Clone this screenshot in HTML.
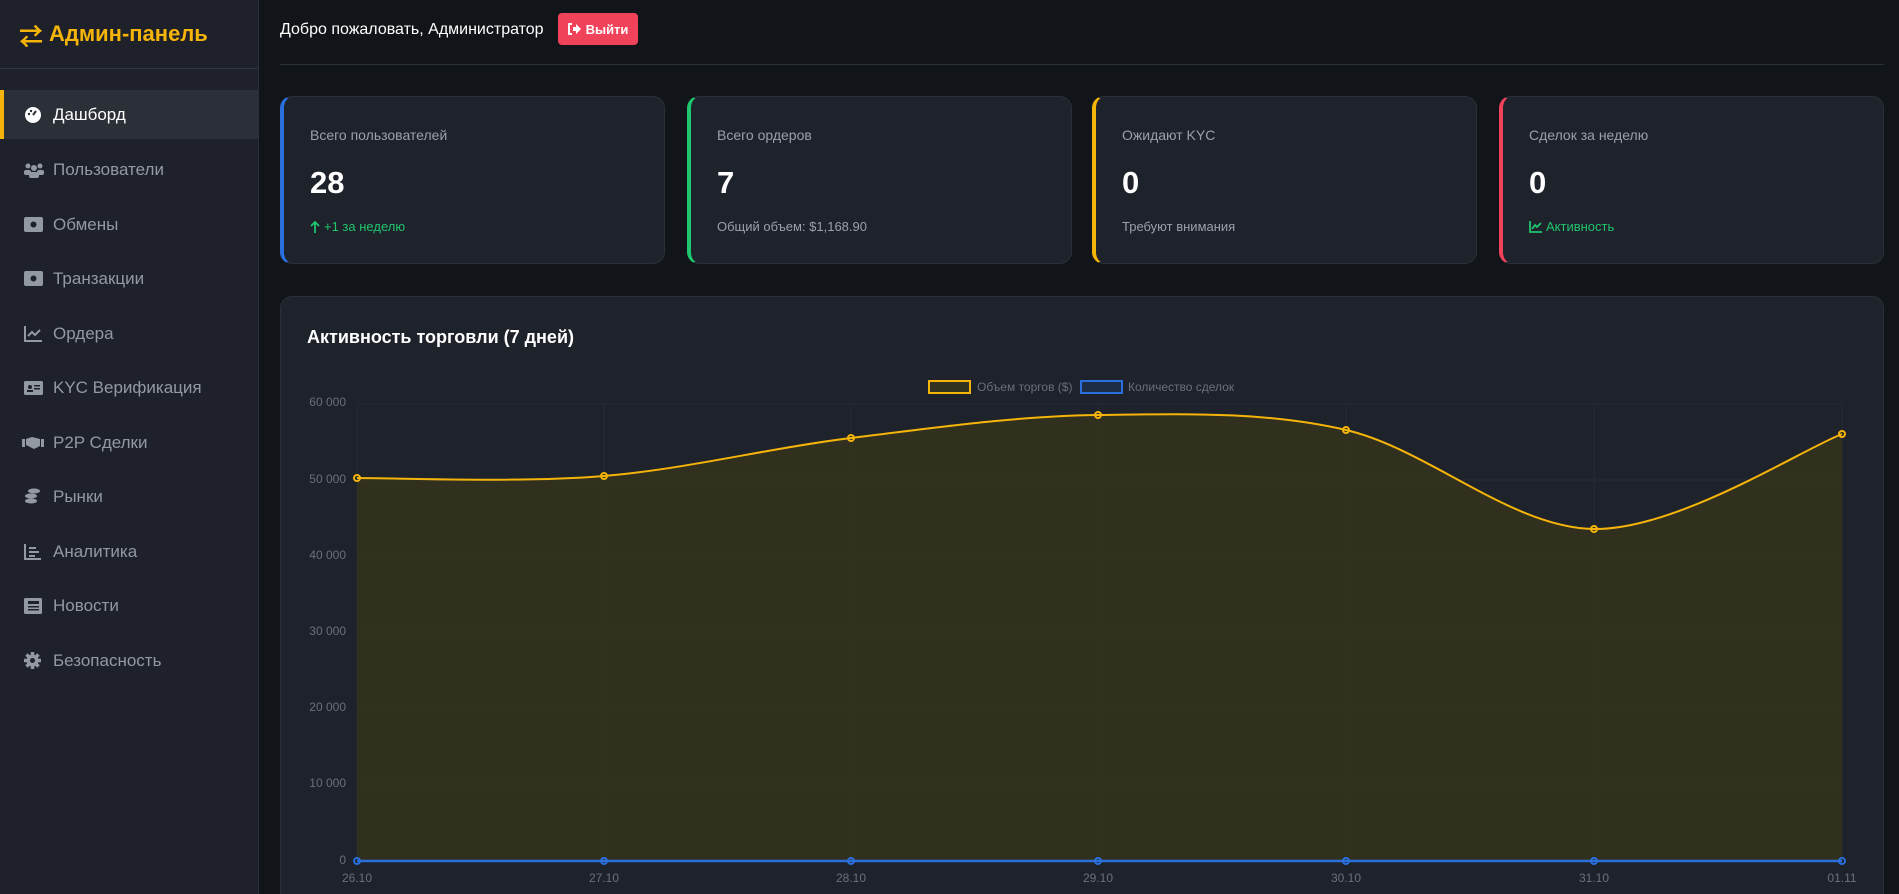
<!DOCTYPE html>
<html><head><meta charset="utf-8"><style>
*{box-sizing:border-box;margin:0;padding:0}
html{width:1899px;height:894px;overflow:hidden}
body{width:1899px;height:894px;overflow:hidden;background:#111418;font-family:"Liberation Sans","Noto Sans CJK SC",sans-serif;position:relative}
.sb{position:absolute;left:0;top:0;width:259px;height:894px;background:#1e2129;border-right:1px solid #2a2e37}
.logo{height:69px;border-bottom:1px solid #2f333c;display:flex;align-items:center;padding-left:19px;color:#f5b40a;font-weight:bold;font-size:22px}
.nav{position:absolute;left:0;width:259px;height:49px;display:flex;align-items:center;color:#9399a3;font-size:17px}
.nav svg{position:absolute;left:24px}
.nav span{position:absolute;left:53px}
.nav.act{background:#2b2f37;color:#fff;border-left:4px solid #f5b40a}
.hdr{position:absolute;left:280px;top:21px;color:#fff;font-size:16px}
.btn{position:absolute;left:558px;top:13px;width:80px;height:32px;background:#f0435a;border-radius:4px;color:#fff;font-size:13px;font-weight:bold;display:flex;align-items:center;justify-content:center;gap:5px}
.div{position:absolute;left:280px;right:15px;top:64px;border-top:1px solid #2b2f37}
.card{position:absolute;top:96px;width:385px;height:168px;background:#1e222a;border:1px solid #2b2f37;border-radius:12px;border-left-width:4px}
.card .l{position:absolute;left:26px;top:30px;color:#9aa0aa;font-size:14px}
.card .n{position:absolute;left:26px;top:68px;color:#fff;font-size:31px;font-weight:bold}
.card .s{position:absolute;left:26px;top:122px;font-size:13px;color:#9aa0aa;display:flex;align-items:center;gap:4px}
.g{color:#1fc56f!important}
.chart{position:absolute;left:280px;top:296px;width:1604px;height:598px;background:#1e222a;border:1px solid #2b2f37;border-bottom:none;border-radius:12px 12px 0 0}
</style></head><body>
<div class="sb">
<div class="logo"><span style="font-size:24px;margin-right:6px">⇄</span>Админ-панель</div>
<div class="nav act" style="top:90px"><svg style="left:20px" width="18" height="18" viewBox="0 0 18 18"><circle cx="9" cy="9" r="8" fill="#fff"/><path d="M9 9 L12 5" stroke="#2b2f37" stroke-width="2"/><circle cx="5" cy="8" r="1.2" fill="#2b2f37"/><circle cx="7" cy="5" r="1.2" fill="#2b2f37"/></svg><span style="left:49px">Дашборд</span></div>
<div class="nav" style="top:145px"><svg width="20" height="16" viewBox="0 0 20 16" fill="#9399a3"><circle cx="4" cy="4" r="2.5"/><circle cx="16" cy="4" r="2.5"/><circle cx="10" cy="6" r="3"/><rect x="0" y="8" width="7" height="5" rx="2"/><rect x="13" y="8" width="7" height="5" rx="2"/><rect x="5" y="10" width="10" height="6" rx="2"/></svg><span>Пользователи</span></div>
<div class="nav" style="top:200px"><svg width="19" height="15" viewBox="0 0 19 15"><rect width="19" height="15" rx="2" fill="#9399a3"/><circle cx="9.5" cy="7.5" r="3" fill="#1e2129"/></svg><span>Обмены</span></div>
<div class="nav" style="top:254px"><svg width="19" height="15" viewBox="0 0 19 15"><rect width="19" height="15" rx="2" fill="#9399a3"/><circle cx="9.5" cy="7.5" r="3" fill="#1e2129"/></svg><span>Транзакции</span></div>
<div class="nav" style="top:309px"><svg width="18" height="16" viewBox="0 0 18 16" fill="none" stroke="#9399a3" stroke-width="2"><path d="M1 0V15H18M4 10L8 6L11 9L16 4"/></svg><span>Ордера</span></div>
<div class="nav" style="top:363px"><svg width="19" height="14" viewBox="0 0 19 14"><rect width="19" height="14" rx="1.5" fill="#9399a3"/><circle cx="6" cy="6" r="2" fill="#1e2129"/><rect x="10" y="4" width="6" height="1.5" fill="#1e2129"/><rect x="10" y="7" width="6" height="1.5" fill="#1e2129"/><rect x="3" y="9" width="6" height="2" fill="#1e2129"/></svg><span>KYC Верификация</span></div>
<div class="nav" style="top:418px"><svg style="left:22px" width="22" height="14" viewBox="0 0 22 14" fill="#9399a3"><rect x="0" y="3" width="3" height="8"/><rect x="19" y="3" width="3" height="8"/><path d="M4 3L10 1L18 3V10L12 13L4 9Z"/></svg><span>P2P Сделки</span></div>
<div class="nav" style="top:472px"><svg width="17" height="17" viewBox="0 0 17 17" fill="#9399a3"><ellipse cx="10" cy="3" rx="6" ry="2.5"/><ellipse cx="7" cy="8" rx="6" ry="2.5"/><ellipse cx="7" cy="13" rx="6" ry="2.5"/></svg><span>Рынки</span></div>
<div class="nav" style="top:527px"><svg width="17" height="16" viewBox="0 0 17 16" fill="none" stroke="#9399a3" stroke-width="2"><path d="M1 0V15H17M5 4H12M5 8H15M5 12H11"/></svg><span>Аналитика</span></div>
<div class="nav" style="top:581px"><svg width="18" height="16" viewBox="0 0 18 16"><rect x="0" y="0" width="18" height="16" rx="1.5" fill="#9399a3"/><rect x="4" y="3" width="11" height="3" fill="#1e2129"/><rect x="4" y="8" width="11" height="1.5" fill="#1e2129"/><rect x="4" y="11" width="11" height="1.5" fill="#1e2129"/></svg><span>Новости</span></div>
<div class="nav" style="top:636px"><svg width="17" height="17" viewBox="0 0 17 17"><circle cx="8.5" cy="8.5" r="6" fill="#9399a3"/><g stroke="#9399a3" stroke-width="3.5"><path d="M8.5 0V17M0 8.5H17M2.5 2.5L14.5 14.5M14.5 2.5L2.5 14.5"/></g><circle cx="8.5" cy="8.5" r="2.5" fill="#1e2129"/></svg><span>Безопасность</span></div>
</div>
<div class="hdr">Добро пожаловать, Администратор</div>
<div class="btn"><svg width="13" height="12" viewBox="0 0 13 12" fill="#fff"><path d="M0 1Q0 0 1 0H4V2H2V10H4V12H1Q0 12 0 11Z"/><path d="M5 4H8V1L13 6L8 11V8H5Z"/></svg>Выйти</div>
<div class="div"></div>
<div class="card" style="left:280px;border-left-color:#2a6fdb"><div class="l">Всего пользователей</div><div class="n">28</div><div class="s g"><svg width="10" height="12" viewBox="0 0 10 12" fill="none" stroke="#1fc56f" stroke-width="1.8"><path d="M5 12V1M1 5L5 1L9 5"/></svg>+1 за неделю</div></div>
<div class="card" style="left:687px;border-left-color:#1fc56f"><div class="l">Всего ордеров</div><div class="n">7</div><div class="s">Общий объем: $1,168.90</div></div>
<div class="card" style="left:1092px;border-left-color:#f5b40a"><div class="l">Ожидают KYC</div><div class="n">0</div><div class="s">Требуют внимания</div></div>
<div class="card" style="left:1499px;border-left-color:#f0435a"><div class="l">Сделок за неделю</div><div class="n">0</div><div class="s g"><svg width="13" height="12" viewBox="0 0 13 12" fill="none" stroke="#1fc56f" stroke-width="1.8"><path d="M1 0V11H13M3 8L6 4L8 6L12 2"/></svg>Активность</div></div>
<div class="chart"><div style="position:absolute;left:26px;top:30px;color:#fff;font-size:18px;font-weight:bold">Активность торговли (7 дней)</div></div>
<svg style="position:absolute;left:0;top:0" width="1899" height="894">
<g fill="#6b7078" font-size="12" font-family="Liberation Sans,sans-serif" text-anchor="end">
<text x="346" y="406">60 000</text><text x="346" y="483">50 000</text><text x="346" y="559">40 000</text><text x="346" y="635">30 000</text><text x="346" y="711">20 000</text><text x="346" y="787">10 000</text><text x="346" y="864">0</text></g>
<g fill="#6b7078" font-size="12" font-family="Liberation Sans,sans-serif" text-anchor="middle">
<text x="357" y="882">26.10</text><text x="604" y="882">27.10</text><text x="851" y="882">28.10</text><text x="1098" y="882">29.10</text><text x="1346" y="882">30.10</text><text x="1594" y="882">31.10</text><text x="1842" y="882">01.11</text></g>
<g stroke="#262a31" stroke-width="1"><path d="M357 404H1842M357 480H1842M357 556H1842M357 632H1842M357 708H1842M357 784H1842"/><path d="M357 404V861M604 404V861M851 404V861M1098 404V861M1346 404V861M1594 404V861M1842 404V861"/></g>
<rect x="929" y="381" width="41" height="12" fill="#33311f" stroke="#f5b40a" stroke-width="2"/>
<text x="977" y="391" fill="#6b7078" font-size="12" font-family="Liberation Sans,sans-serif">Объем торгов ($)</text>
<rect x="1081" y="381" width="41" height="12" fill="#1e2b44" stroke="#2a6fdb" stroke-width="2"/>
<text x="1128" y="391" fill="#6b7078" font-size="12" font-family="Liberation Sans,sans-serif">Количество сделок</text>
<path d="M357 478C398 478 521 483 604 476C687 469 769 448 851 438C933 428 1016 416 1098 415C1180 414 1264 411 1346 430C1428 449 1512 528 1594 529C1677 530 1801 450 1842 434L1842 861L357 861Z" fill="#33311f" fill-opacity="0.95"/>
<path d="M357 478C398 478 521 483 604 476C687 469 769 448 851 438C933 428 1016 416 1098 415C1180 414 1264 411 1346 430C1428 449 1512 528 1594 529C1677 530 1801 450 1842 434" fill="none" stroke="#f5b40a" stroke-width="2"/>
<g fill="none" stroke="#f5b40a" stroke-width="2"><circle cx="357" cy="478" r="3"/><circle cx="604" cy="476" r="3"/><circle cx="851" cy="438" r="3"/><circle cx="1098" cy="415" r="3"/><circle cx="1346" cy="430" r="3"/><circle cx="1594" cy="529" r="3"/><circle cx="1842" cy="434" r="3"/></g>
<path d="M357 861H1842" stroke="#2a6fdb" stroke-width="2.5"/>
<g fill="none" stroke="#2a6fdb" stroke-width="2"><circle cx="357" cy="861" r="3"/><circle cx="604" cy="861" r="3"/><circle cx="851" cy="861" r="3"/><circle cx="1098" cy="861" r="3"/><circle cx="1346" cy="861" r="3"/><circle cx="1594" cy="861" r="3"/><circle cx="1842" cy="861" r="3"/></g>
</svg>
</body></html>
